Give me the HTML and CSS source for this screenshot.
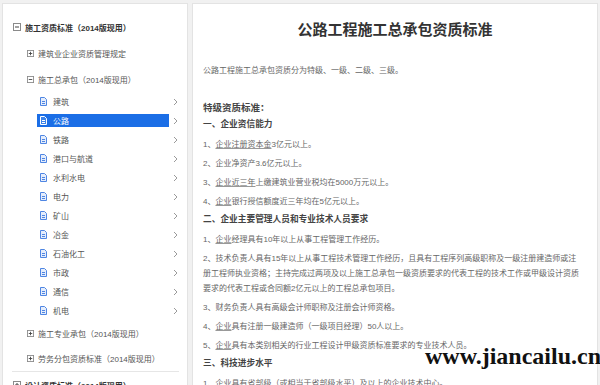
FILE: index.html
```html
<!DOCTYPE html>
<html lang="zh-CN">
<head>
  <meta charset="UTF-8" />
  <meta name="viewport" content="width=device-width, initial-scale=1.0"/>
  <title>公路工程施工总承包资质标准</title>
  <link rel="stylesheet" href="styles.css">
</head>
<body>
  <svg class="sprites" xmlns="http://www.w3.org/2000/svg">
    <symbol id="i-minus" viewBox="0 0 8 8"><rect x="0.5" y="0.5" width="7" height="7" fill="#fff" stroke="#8a8a8a"/><path d="M2 4h4" stroke="#444"/></symbol>
    <symbol id="i-plus" viewBox="0 0 8 8"><rect x="0.5" y="0.5" width="7" height="7" fill="#fff" stroke="#8a8a8a"/><path d="M2 4h4M4 2v4" stroke="#444"/></symbol>
    <symbol id="i-doc" viewBox="0 0 7 9"><path d="M0.5 0.5h4l2 2v6h-6z" fill="currentColor" fill-opacity="0.15" stroke="currentColor"/><path d="M2 4.5h3M2 6.5h3" stroke="currentColor"/></symbol>
    <symbol id="i-chev" viewBox="0 0 5 8"><path d="M1 1l3 3-3 3" fill="none" stroke="#9a9a9a"/></symbol>
  </svg>

  <div class="page">
    <aside class="side">
      <div class="tree-row root"><svg class="tog"><use href="#i-minus"/></svg>施工资质标准（2014版现用）</div>
      <div class="tree-row sub"><svg class="tog small"><use href="#i-plus"/></svg>建筑业企业资质管理规定</div>
      <div class="tree-row sub"><svg class="tog small"><use href="#i-minus"/></svg>施工总承包（2014版现用）</div>
      <ul class="leaves">
        <li class="leaf"><span class="leaf-name"><svg class="doc"><use href="#i-doc"/></svg>建筑</span><svg class="chev"><use href="#i-chev"/></svg></li>
        <li class="leaf active"><span class="leaf-name"><svg class="doc"><use href="#i-doc"/></svg>公路</span><svg class="chev"><use href="#i-chev"/></svg></li>
        <li class="leaf"><span class="leaf-name"><svg class="doc"><use href="#i-doc"/></svg>铁路</span><svg class="chev"><use href="#i-chev"/></svg></li>
        <li class="leaf"><span class="leaf-name"><svg class="doc"><use href="#i-doc"/></svg>港口与航道</span><svg class="chev"><use href="#i-chev"/></svg></li>
        <li class="leaf"><span class="leaf-name"><svg class="doc"><use href="#i-doc"/></svg>水利水电</span><svg class="chev"><use href="#i-chev"/></svg></li>
        <li class="leaf"><span class="leaf-name"><svg class="doc"><use href="#i-doc"/></svg>电力</span><svg class="chev"><use href="#i-chev"/></svg></li>
        <li class="leaf"><span class="leaf-name"><svg class="doc"><use href="#i-doc"/></svg>矿山</span><svg class="chev"><use href="#i-chev"/></svg></li>
        <li class="leaf"><span class="leaf-name"><svg class="doc"><use href="#i-doc"/></svg>冶金</span><svg class="chev"><use href="#i-chev"/></svg></li>
        <li class="leaf"><span class="leaf-name"><svg class="doc"><use href="#i-doc"/></svg>石油化工</span><svg class="chev"><use href="#i-chev"/></svg></li>
        <li class="leaf"><span class="leaf-name"><svg class="doc"><use href="#i-doc"/></svg>市政</span><svg class="chev"><use href="#i-chev"/></svg></li>
        <li class="leaf"><span class="leaf-name"><svg class="doc"><use href="#i-doc"/></svg>通信</span><svg class="chev"><use href="#i-chev"/></svg></li>
        <li class="leaf"><span class="leaf-name"><svg class="doc"><use href="#i-doc"/></svg>机电</span><svg class="chev"><use href="#i-chev"/></svg></li>
      </ul>
      <div class="tree-row sub"><svg class="tog small"><use href="#i-plus"/></svg>施工专业承包（2014版现用）</div>
      <div class="tree-row sub last"><svg class="tog small"><use href="#i-plus"/></svg>劳务分包资质标准（2014版现用）</div>
      <hr class="tree-sep">
      <div class="tree-row root"><svg class="tog"><use href="#i-plus"/></svg>设计资质标准（2014版现用）</div>
    </aside>

    <main class="article">
      <h1>公路工程施工总承包资质标准</h1>
      <p class="intro">公路工程施工总承包资质分为特级、一级、二级、三级。</p>

      <h3 class="grade">特级资质标准：</h3>
      <h4 class="sec first">一、企业资信能力</h4>
      <p>1、<u>企业注册资本金</u>3亿元以上。</p>
      <p>2、企业净资产3.6亿元以上。</p>
      <p>3、<u>企业近三年</u>上缴建筑业营业税均在5000万元以上。</p>
      <p>4、<u>企业</u>银行授信额度近三年均在5亿元以上。</p>

      <h4 class="sec">二、企业主要管理人员和专业技术人员要求</h4>
      <p>1、<u>企业</u>经理具有10年以上从事工程管理工作经历。</p>
      <p>2、技术负责人具有15年以上从事工程技术管理工作经历，且具有工程序列高级职称及一级注册建造师或注<br>册工程师执业资格；主持完成过两项及以上施工总承包一级资质要求的代表工程的技术工作或甲级设计资质<br>要求的代表工程或合同额2亿元以上的工程总承包项目。</p>
      <p>3、财务负责人具有高级会计师职称及注册会计师资格。</p>
      <p>4、<u>企业</u>具有注册一级建造师（一级项目经理）50人以上。</p>
      <p>5、<u>企业</u>具有本类别相关的行业工程设计甲级资质标准要求的专业技术人员。</p>

      <h4 class="sec">三、科技进步水平</h4>
      <p>1、企业具有省部级（或相当于省部级水平）及以上的企业技术中心。</p>
    </main>
  </div>

  <div class="watermark">www.jiancailu.cn</div>
</body>
</html>
```

FILE: styles.css
```css
body {
  margin: 0;
  height: 385px;
  overflow: hidden;
  background: #f1f1f1;
  font-family: "Liberation Sans", "Noto Sans CJK SC", sans-serif;
  color: #555;
}
.sprites {
  display: none;
}

.page {
  display: flex;
  gap: 4px;
  padding: 3px 2px 0 2px;
  height: 382px;
}

/* left tree */
.side {
  width: 184px;
  flex: none;
  background: #fff;
  border: 1px solid #e3e3e3;
  border-bottom: none;
  padding-top: 10px;
}
.tree-row {
  display: flex;
  align-items: center;
  height: 26px;
  font-size: 8px;
  white-space: nowrap;
}
.tree-row.root {
  padding-left: 10px;
  font-weight: bold;
  color: #333;
}
.tree-row.sub {
  padding-left: 24px;
  color: #555;
}
.tree-row.last {
  height: 25px;
}
.tog {
  width: 8px;
  height: 8px;
  margin-right: 4px;
  flex: none;
}
.tog.small {
  width: 7px;
  height: 7px;
}
.tree-sep {
  margin: 0 8px 0 9px;
  border: none;
  border-top: 1px solid #e6e6e6;
  height: 0;
}

.leaves {
  list-style: none;
  margin: 0;
  padding: 0;
}
.leaf {
  display: flex;
  align-items: center;
  height: 19px;
  padding-left: 34px;
  font-size: 8px;
}
.leaf-name {
  display: flex;
  align-items: center;
  width: 129px;
  height: 13px;
  padding-left: 3px;
  color: #555;
}
.leaf-name .doc {
  width: 7px;
  height: 9px;
  margin-right: 6px;
  flex: none;
  color: #4f86e3;
}
.leaf.active .leaf-name {
  background: #1b6ee6;
  color: #fff;
}
.leaf.active .doc {
  color: #fff;
}
.chev {
  width: 5px;
  height: 8px;
  margin-left: 4px;
}

/* article */
.article {
  flex: 1;
  background: #fff;
  border: 1px solid #e3e3e3;
  border-bottom: none;
  padding: 14px 10px 0 10px;
  overflow: hidden;
}
.article h1 {
  margin: 0;
  font-size: 15px;
  line-height: 24px;
  text-align: center;
  color: #333;
  font-weight: bold;
}
.article p {
  margin: 0 0 4px;
  font-size: 8px;
  line-height: 15px;
  color: #666;
  white-space: nowrap;
}
.article p.intro {
  margin-top: 21px;
}
.article u {
  text-decoration-color: #999;
}
.grade {
  margin: 22px 0 0;
  font-size: 9.5px;
  line-height: 16px;
  color: #444;
}
.sec {
  margin: -2px 0 5px;
  font-size: 8.7px;
  line-height: 16px;
  color: #444;
}
.sec.first {
  margin-top: 0;
}

.watermark {
  position: absolute;
  left: 425px;
  top: 344px;
  font-family: "Times New Roman", "Liberation Serif", serif;
  font-weight: 700;
  font-size: 24px;
  line-height: 24px;
  color: #111;
}
```
